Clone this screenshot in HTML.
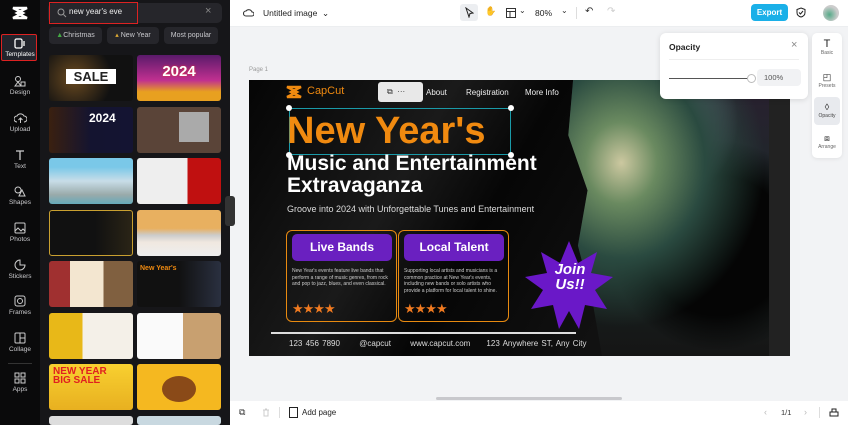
<!DOCTYPE html>
<html><head><meta charset="utf-8"><style>
*{box-sizing:border-box;margin:0;padding:0}
html,body{width:848px;height:425px;overflow:hidden}
body{font-family:"Liberation Sans",sans-serif;background:#f2f3f5;position:relative}
.abs{position:absolute}
#side{left:0;top:0;width:40px;height:425px;background:#0a0a0b}
.si{position:absolute;left:0;width:40px;text-align:center;color:#c9c9cc;font-size:6.5px}
.si svg{display:block;margin:0 auto 2px}
#panel{left:40px;top:0;width:190px;height:425px;background:#161619;overflow:hidden}
.th{position:absolute;width:84px;height:46px;border-radius:3px;overflow:hidden}
.chip{position:absolute;top:27px;height:17px;border-radius:4px;background:#26262b;color:#c8c8cc;font-size:7px;line-height:17px;text-align:center}
</style></head><body>
<div id="side" class="abs">
 <svg class="abs" style="left:11px;top:6px" width="18" height="14" viewBox="0 0 18 14"><path d="M2 2h14L6 7l10 5H2l10-5z" fill="none" stroke="#fff" stroke-width="2.4"/></svg>
 <div class="abs" style="left:1px;top:34px;width:36px;height:27px;border:1px solid #d22;border-radius:2px;background:#22242c"></div>
 <div class="si" style="top:38px;color:#fff"><svg width="12" height="11"><rect x="1" y="1" width="7" height="9" rx="1.5" fill="none" stroke="#fff" stroke-width="1.3"/><path d="M10 3v5" stroke="#fff" stroke-width="1.3"/></svg>Templates</div>
 <div class="si" style="top:75px"><svg width="12" height="12"><circle cx="4" cy="4" r="2.5" fill="none" stroke="#ccc"/><rect x="7" y="7" width="4" height="4" fill="none" stroke="#ccc"/><path d="M1 11l3-4 3 4z" fill="none" stroke="#ccc"/></svg>Design</div>
 <div class="si" style="top:112px"><svg width="13" height="12"><path d="M3 10a3 3 0 0 1 0-6 4 4 0 0 1 7 0 3 3 0 0 1 0 6M6.5 11V6M4.5 8l2-2 2 2" fill="none" stroke="#ccc"/></svg>Upload</div>
 <div class="si" style="top:149px"><svg width="12" height="12"><path d="M2 2h8M6 2v9" stroke="#ccc" stroke-width="1.3"/></svg>Text</div>
 <div class="si" style="top:185px"><svg width="12" height="12"><circle cx="4" cy="5" r="3" fill="none" stroke="#ccc"/><path d="M5 11l3-6 3 6z" fill="none" stroke="#ccc"/></svg>Shapes</div>
 <div class="si" style="top:222px"><svg width="12" height="12"><rect x="1" y="1" width="10" height="10" rx="1" fill="none" stroke="#ccc"/><path d="M1 9l3-3 3 3 2-2 2 2" fill="none" stroke="#ccc"/></svg>Photos</div>
 <div class="si" style="top:259px"><svg width="12" height="12"><path d="M6 1a5 5 0 1 0 5 5h-5z" fill="none" stroke="#ccc"/></svg>Stickers</div>
 <div class="si" style="top:295px"><svg width="12" height="12"><rect x="1" y="1" width="10" height="10" rx="2" fill="none" stroke="#ccc"/><circle cx="6" cy="6" r="2.5" fill="none" stroke="#ccc"/></svg>Frames</div>
 <div class="si" style="top:332px"><svg width="12" height="12"><rect x="1" y="1" width="10" height="10" rx="1" fill="none" stroke="#ccc"/><path d="M6 1v10M6 6h5" stroke="#ccc"/></svg>Collage</div>
 <div class="abs" style="left:8px;top:363px;width:24px;height:1px;background:#333"></div>
 <div class="si" style="top:372px"><svg width="12" height="12"><rect x="1" y="1" width="4" height="4" fill="none" stroke="#ccc"/><rect x="7" y="1" width="4" height="4" fill="none" stroke="#ccc"/><rect x="1" y="7" width="4" height="4" fill="none" stroke="#ccc"/><rect x="7" y="7" width="4" height="4" fill="none" stroke="#ccc"/></svg>Apps</div>
</div>
<div id="panel" class="abs">
 <div class="abs" style="left:8px;top:3px;width:174px;height:20px;background:#26262b;border-radius:5px"></div>
 <div class="abs" style="left:9px;top:2px;width:89px;height:22px;border:1px solid #d22"></div>
 <svg class="abs" style="left:17px;top:8px" width="10" height="10"><circle cx="4" cy="4" r="3" fill="none" stroke="#999"/><path d="M6.5 6.5L9 9" stroke="#999"/></svg>
 <div class="abs" style="left:29px;top:7px;font-size:8px;color:#eee">new year's eve</div>
 <div class="abs" style="left:165px;top:5px;font-size:11px;color:#888">×</div>
 <div class="chip" style="left:9px;width:53px"><span style="color:#4a4">▲</span>Christmas</div>
 <div class="chip" style="left:67px;width:52px"><span style="color:#da3">▴</span> New Year</div>
 <div class="chip" style="left:124px;width:54px">Most popular</div>
 <div class="th" style="left:9px;top:55px;background:radial-gradient(circle at 30% 50%,#6a4a20,#111 60%)"><div style="margin:14px auto 0;width:50px;background:#fff;color:#222;font:bold 13px 'Liberation Sans';text-align:center">SALE</div></div>
 <div class="th" style="left:97px;top:55px;background:linear-gradient(#5a1a6a,#c03090 55%,#e8a020 80%)"><div style="margin-top:8px;color:#fff;font:bold 15px 'Liberation Sans';text-align:center;text-shadow:0 0 2px #e33">2024</div></div>
 <div class="th" style="left:9px;top:107px;background:linear-gradient(90deg,#3a2010,#141430 50%,#141432)"><div style="margin:4px 0 0 40px;color:#fff;font:bold 12px 'Liberation Sans'">2024</div></div>
 <div class="th" style="left:97px;top:107px;background:#5a4438"><div style="width:30px;height:30px;margin:5px 0 0 42px;background:#aaa"></div></div>
 <div class="th" style="left:9px;top:158px;background:linear-gradient(#7ac8e8 20%,#c8dde8 50%,#9aa 80%,#6ab 100%)"></div>
 <div class="th" style="left:97px;top:158px;background:linear-gradient(90deg,#eee 60%,#c01010 60%)"></div>
 <div class="th" style="left:9px;top:210px;background:linear-gradient(90deg,#111 55%,#2a2416);border:1px solid #c9a030"></div>
 <div class="th" style="left:97px;top:210px;background:linear-gradient(#e8b060 40%,#ccc 55%,#f0e8e0 70%,#eee)"></div>
 <div class="th" style="left:9px;top:261px;background:linear-gradient(90deg,#a03030 25%,#f3e6d0 25% 65%,#806040 65%)"></div>
 <div class="th" style="left:97px;top:261px;background:linear-gradient(90deg,#111 50%,#2a3040)"><div style="margin:4px 0 0 3px;color:#f08a10;font:bold 7px 'Liberation Sans'">New Year's</div></div>
 <div class="th" style="left:9px;top:313px;background:linear-gradient(90deg,#e8b818 40%,#f4f0e8 40%)"></div>
 <div class="th" style="left:97px;top:313px;background:linear-gradient(90deg,#fafafa 55%,#c8a070 55%)"></div>
 <div class="th" style="left:9px;top:364px;background:linear-gradient(#f8d030,#e8b020)"><div style="margin:3px 0 0 4px;color:#e02020;font:bold 10px 'Liberation Sans';line-height:9px">NEW YEAR<br>BIG SALE</div></div>
 <div class="th" style="left:97px;top:364px;background:#f5b820"><div style="width:34px;height:26px;border-radius:50%;background:#8a4a18;margin:12px 0 0 25px"></div></div>
 <div class="th" style="left:9px;top:416px;height:9px;background:#ddd"></div>
 <div class="th" style="left:97px;top:416px;height:9px;background:#c8d8e0"></div>
 <div class="abs" style="left:185px;top:196px;width:5px;height:30px;background:#333;border-radius:3px 0 0 3px"></div>
</div>
<div class="abs" style="left:230px;top:196px;width:5px;height:30px;background:#333;border-radius:0 3px 3px 0"></div>
<!-- top bar -->
<div class="abs" style="left:230px;top:0;width:618px;height:27px;background:#fff;border-bottom:1px solid #eceef0"></div>
<svg class="abs" style="left:243px;top:8px" width="11" height="10"><path d="M3 8a2.5 2.5 0 0 1 0-5 3.5 3.5 0 0 1 6 1 2 2 0 0 1 0 4z" fill="none" stroke="#333" stroke-width="1.1"/></svg>
<div class="abs" style="left:263px;top:8px;font-size:8.5px;color:#222">Untitled image &nbsp;⌄</div>
<div class="abs" style="left:460px;top:4px;width:18px;height:17px;background:#eceef1;border-radius:3px"></div>
<svg class="abs" style="left:464px;top:7px" width="10" height="11"><path d="M2 1l7 5-3 .5-1 3.5z" fill="none" stroke="#222"/></svg>
<div class="abs" style="left:485px;top:6px;font-size:9px;line-height:11px;color:#333">✋</div>
<svg class="abs" style="left:506px;top:8px" width="10" height="10"><rect x=".5" y=".5" width="9" height="9" fill="none" stroke="#333"/><path d="M.5 3.5h9M4 3.5v6" stroke="#333"/></svg>
<div class="abs" style="left:519px;top:6px;font-size:8px;color:#333">⌄</div>
<div class="abs" style="left:535px;top:8px;font-size:8.5px;color:#222">80%</div>
<div class="abs" style="left:561px;top:6px;font-size:8px;color:#333">⌄</div>
<div class="abs" style="left:576px;top:7px;width:1px;height:12px;background:#ddd"></div>
<div class="abs" style="left:585px;top:6px;font-size:10px;color:#333">↶</div>
<div class="abs" style="left:607px;top:6px;font-size:10px;color:#ccc">↷</div>
<div class="abs" style="left:751px;top:4px;width:37px;height:17px;background:#1ab0e8;border-radius:4px;color:#fff;font:bold 8px/17px 'Liberation Sans';text-align:center">Export</div>
<svg class="abs" style="left:796px;top:7px" width="10" height="11"><path d="M5 1l4 1.5v3c0 2.5-2 4-4 4.5-2-.5-4-2-4-4.5v-3z M3 5.5l1.5 1.5 2.5-3" fill="none" stroke="#222"/></svg>
<div class="abs" style="left:823px;top:5px;width:16px;height:16px;border-radius:50%;background:radial-gradient(circle at 40% 60%,#5a8,#ccc 60%)"></div>
<!-- canvas -->
<div class="abs" style="left:249px;top:67px;font-size:6px;color:#999">Page 1</div>
<div class="abs" style="left:249px;top:80px;width:541px;height:276px;background:linear-gradient(120deg,#050505,#1a1a1a 30%,#060606 45%,#111 70%);overflow:hidden">
 <div class="abs" style="left:300px;top:0;width:241px;height:276px;background:radial-gradient(ellipse at 30% 30%,#ccc8a0 0,#6a8a60 15%,#2a4a40 35%,transparent 60%),radial-gradient(circle at 45% 15%,#a8a0c8,transparent 30%),radial-gradient(ellipse at 70% 60%,#050505 30%,transparent 45%),linear-gradient(#2a2030,#1a2a28 50%,#151515);clip-path:polygon(10% 0,100% 0,100% 100%,22% 100%,18% 80%,12% 60%,16% 40%,8% 20%)"></div>
 <div class="abs" style="left:520px;top:0;width:21px;height:276px;background:#222"></div>
 <svg class="abs" style="left:36px;top:5px" width="18" height="14"><path d="M2 2h14L6 7l10 5H2l10-5z" fill="none" stroke="#f08a10" stroke-width="2.4"/></svg>
 <div class="abs" style="left:58px;top:5px;font-size:11px;color:#f08a10">CapCut</div>
 <div class="abs" style="left:129px;top:2px;width:45px;height:20px;background:#e8e8e8;border-radius:3px;font-size:8px;color:#333;line-height:20px;padding-left:9px">⧉ &nbsp;···</div>
 <div class="abs" style="left:177px;top:8px;font-size:8px;color:#eee">About</div>
 <div class="abs" style="left:217px;top:8px;font-size:8px;color:#eee">Registration</div>
 <div class="abs" style="left:276px;top:8px;font-size:8px;color:#eee">More Info</div>
 <div class="abs" style="left:40px;top:28px;width:222px;height:47px;border:1px solid #1a9aa8"></div>
 <div class="abs" style="left:37px;top:25px;width:6px;height:6px;background:#fff;border-radius:50%"></div>
 <div class="abs" style="left:259px;top:25px;width:6px;height:6px;background:#fff;border-radius:50%"></div>
 <div class="abs" style="left:37px;top:72px;width:6px;height:6px;background:#fff;border-radius:50%"></div>
 <div class="abs" style="left:259px;top:72px;width:6px;height:6px;background:#fff;border-radius:50%"></div>
 <div class="abs" style="left:38px;top:28px;font:bold 38px/46px 'Liberation Sans';color:#f08a10">New Year's</div>
 <div class="abs" style="left:38px;top:73px;font:bold 21px/22px 'Liberation Sans';color:#fff">Music and Entertainment<br>Extravaganza</div>
 <div class="abs" style="left:38px;top:124px;font-size:9px;color:#ddd">Groove into 2024 with Unforgettable Tunes and Entertainment</div>
 <div class="abs" style="left:37px;top:150px;width:111px;height:92px;border:1.5px solid #e88a10;border-radius:6px"></div>
 <div class="abs" style="left:43px;top:154px;width:100px;height:27px;background:#6a20c0;border-radius:5px;color:#fff;font:bold 12px/27px 'Liberation Sans';text-align:center">Live Bands</div>
 <div class="abs" style="left:43px;top:188px;width:100px;font-size:5px;line-height:6.5px;color:#ccc">New Year's events feature live bands that perform a range of music genres, from rock and pop to jazz, blues, and even classical.</div>
 <div class="abs" style="left:43px;top:221px;font-size:13px;line-height:15px;color:#f07a20;letter-spacing:-1px">★★★★</div>
 <div class="abs" style="left:149px;top:150px;width:111px;height:92px;border:1.5px solid #e88a10;border-radius:6px"></div>
 <div class="abs" style="left:155px;top:154px;width:100px;height:27px;background:#6a20c0;border-radius:5px;color:#fff;font:bold 12px/27px 'Liberation Sans';text-align:center">Local Talent</div>
 <div class="abs" style="left:155px;top:188px;width:100px;font-size:5px;line-height:6.5px;color:#ccc">Supporting local artists and musicians is a common practice at New Year's events, including new bands or solo artists who provide a platform for local talent to shine.</div>
 <div class="abs" style="left:155px;top:221px;font-size:13px;line-height:15px;color:#f07a20;letter-spacing:-1px">★★★★</div>
 <svg class="abs" style="left:270px;top:155px" width="100" height="100" viewBox="-50 -50 100 100"><polygon points="0,-44 9,-22 28,-33 22,-12 44,-8 26,5 38,24 16,20 10,44 0,26 -10,44 -16,20 -38,24 -26,5 -44,-8 -22,-12 -28,-33 -9,-22" fill="#6a18c8"/></svg>
 <div class="abs" style="left:296px;top:182px;width:50px;text-align:center;font:italic bold 15px/15px 'Liberation Sans';color:#fff">Join<br>Us!!</div>
 <div class="abs" style="left:22px;top:252px;width:305px;height:1.5px;background:#ddd"></div>
 <div class="abs" style="left:40px;top:259px;font-size:8px;color:#ddd;word-spacing:1px">123 456 7890 &nbsp;&nbsp;&nbsp;&nbsp; @capcut &nbsp;&nbsp;&nbsp;&nbsp; www.capcut.com &nbsp;&nbsp;&nbsp; 123 Anywhere ST, Any City</div>
</div>
<!-- opacity popup -->
<div class="abs" style="left:660px;top:33px;width:148px;height:66px;background:#fff;border-radius:6px;box-shadow:0 1px 6px rgba(0,0,0,.12)">
 <div class="abs" style="left:9px;top:9px;font:bold 8.5px 'Liberation Sans';color:#222">Opacity</div>
 <div class="abs" style="left:131px;top:6px;font-size:11px;color:#888">×</div>
 <div class="abs" style="left:9px;top:26px;width:130px;height:1px;background:#eee"></div>
 <div class="abs" style="left:9px;top:45px;width:83px;height:1px;background:#555"></div>
 <div class="abs" style="left:87px;top:41px;width:9px;height:9px;border-radius:50%;background:#fff;border:1px solid #bbb"></div>
 <div class="abs" style="left:97px;top:36px;width:44px;height:17px;background:#f1f2f4;border-radius:4px;font-size:7.5px;line-height:17px;color:#555;padding-left:7px">100%</div>
</div>
<!-- right tools -->
<div class="abs" style="left:812px;top:33px;width:30px;height:125px;background:#fff;border-radius:5px;box-shadow:0 1px 4px rgba(0,0,0,.08)"></div>
<div class="abs" style="left:814px;top:97px;width:26px;height:28px;background:#e8eaee;border-radius:4px"></div>
<div class="abs" style="left:812px;top:38px;width:30px;text-align:center;font-size:5px;color:#666"><div style="font-size:11px;color:#222;line-height:12px">T</div>Basic</div>
<div class="abs" style="left:812px;top:71px;width:30px;text-align:center;font-size:5px;color:#666"><div style="font-size:9px;color:#222;line-height:12px">◰</div>Presets</div>
<div class="abs" style="left:812px;top:101px;width:30px;text-align:center;font-size:5px;color:#444"><div style="font-size:9px;color:#222;line-height:12px">◊</div>Opacity</div>
<div class="abs" style="left:812px;top:132px;width:30px;text-align:center;font-size:5px;color:#666"><div style="font-size:9px;color:#222;line-height:12px">⧈</div>Arrange</div>
<!-- scroll + bottom -->
<div class="abs" style="left:436px;top:397px;width:186px;height:3px;background:#c8c8cc;border-radius:2px"></div>
<div class="abs" style="left:230px;top:401px;width:618px;height:24px;background:#fff"></div>
<div class="abs" style="left:239px;top:407px;font-size:9px;line-height:11px;color:#333">⧉</div>
<svg class="abs" style="left:262px;top:408px" width="8" height="9"><path d="M1 2h6M3 1h2M2 2v6h4V2" fill="none" stroke="#ccc"/></svg>
<div class="abs" style="left:279px;top:407px;width:1px;height:11px;background:#ddd"></div>
<svg class="abs" style="left:289px;top:407px" width="10" height="11"><rect x=".5" y=".5" width="8" height="10" fill="none" stroke="#222"/></svg>
<div class="abs" style="left:302px;top:408px;font-size:8px;line-height:10px;color:#222">Add page</div>
<div class="abs" style="left:764px;top:407px;font-size:9px;line-height:11px;color:#bbb">‹</div>
<div class="abs" style="left:781px;top:408px;font-size:7.5px;line-height:10px;color:#333">1/1</div>
<div class="abs" style="left:804px;top:407px;font-size:9px;line-height:11px;color:#bbb">›</div>
<div class="abs" style="left:819px;top:407px;width:1px;height:11px;background:#ddd"></div>
<svg class="abs" style="left:829px;top:407px" width="10" height="10"><path d="M1 9h8V5H1zM3 5V2h4v3" fill="none" stroke="#222"/></svg>
</body></html>
